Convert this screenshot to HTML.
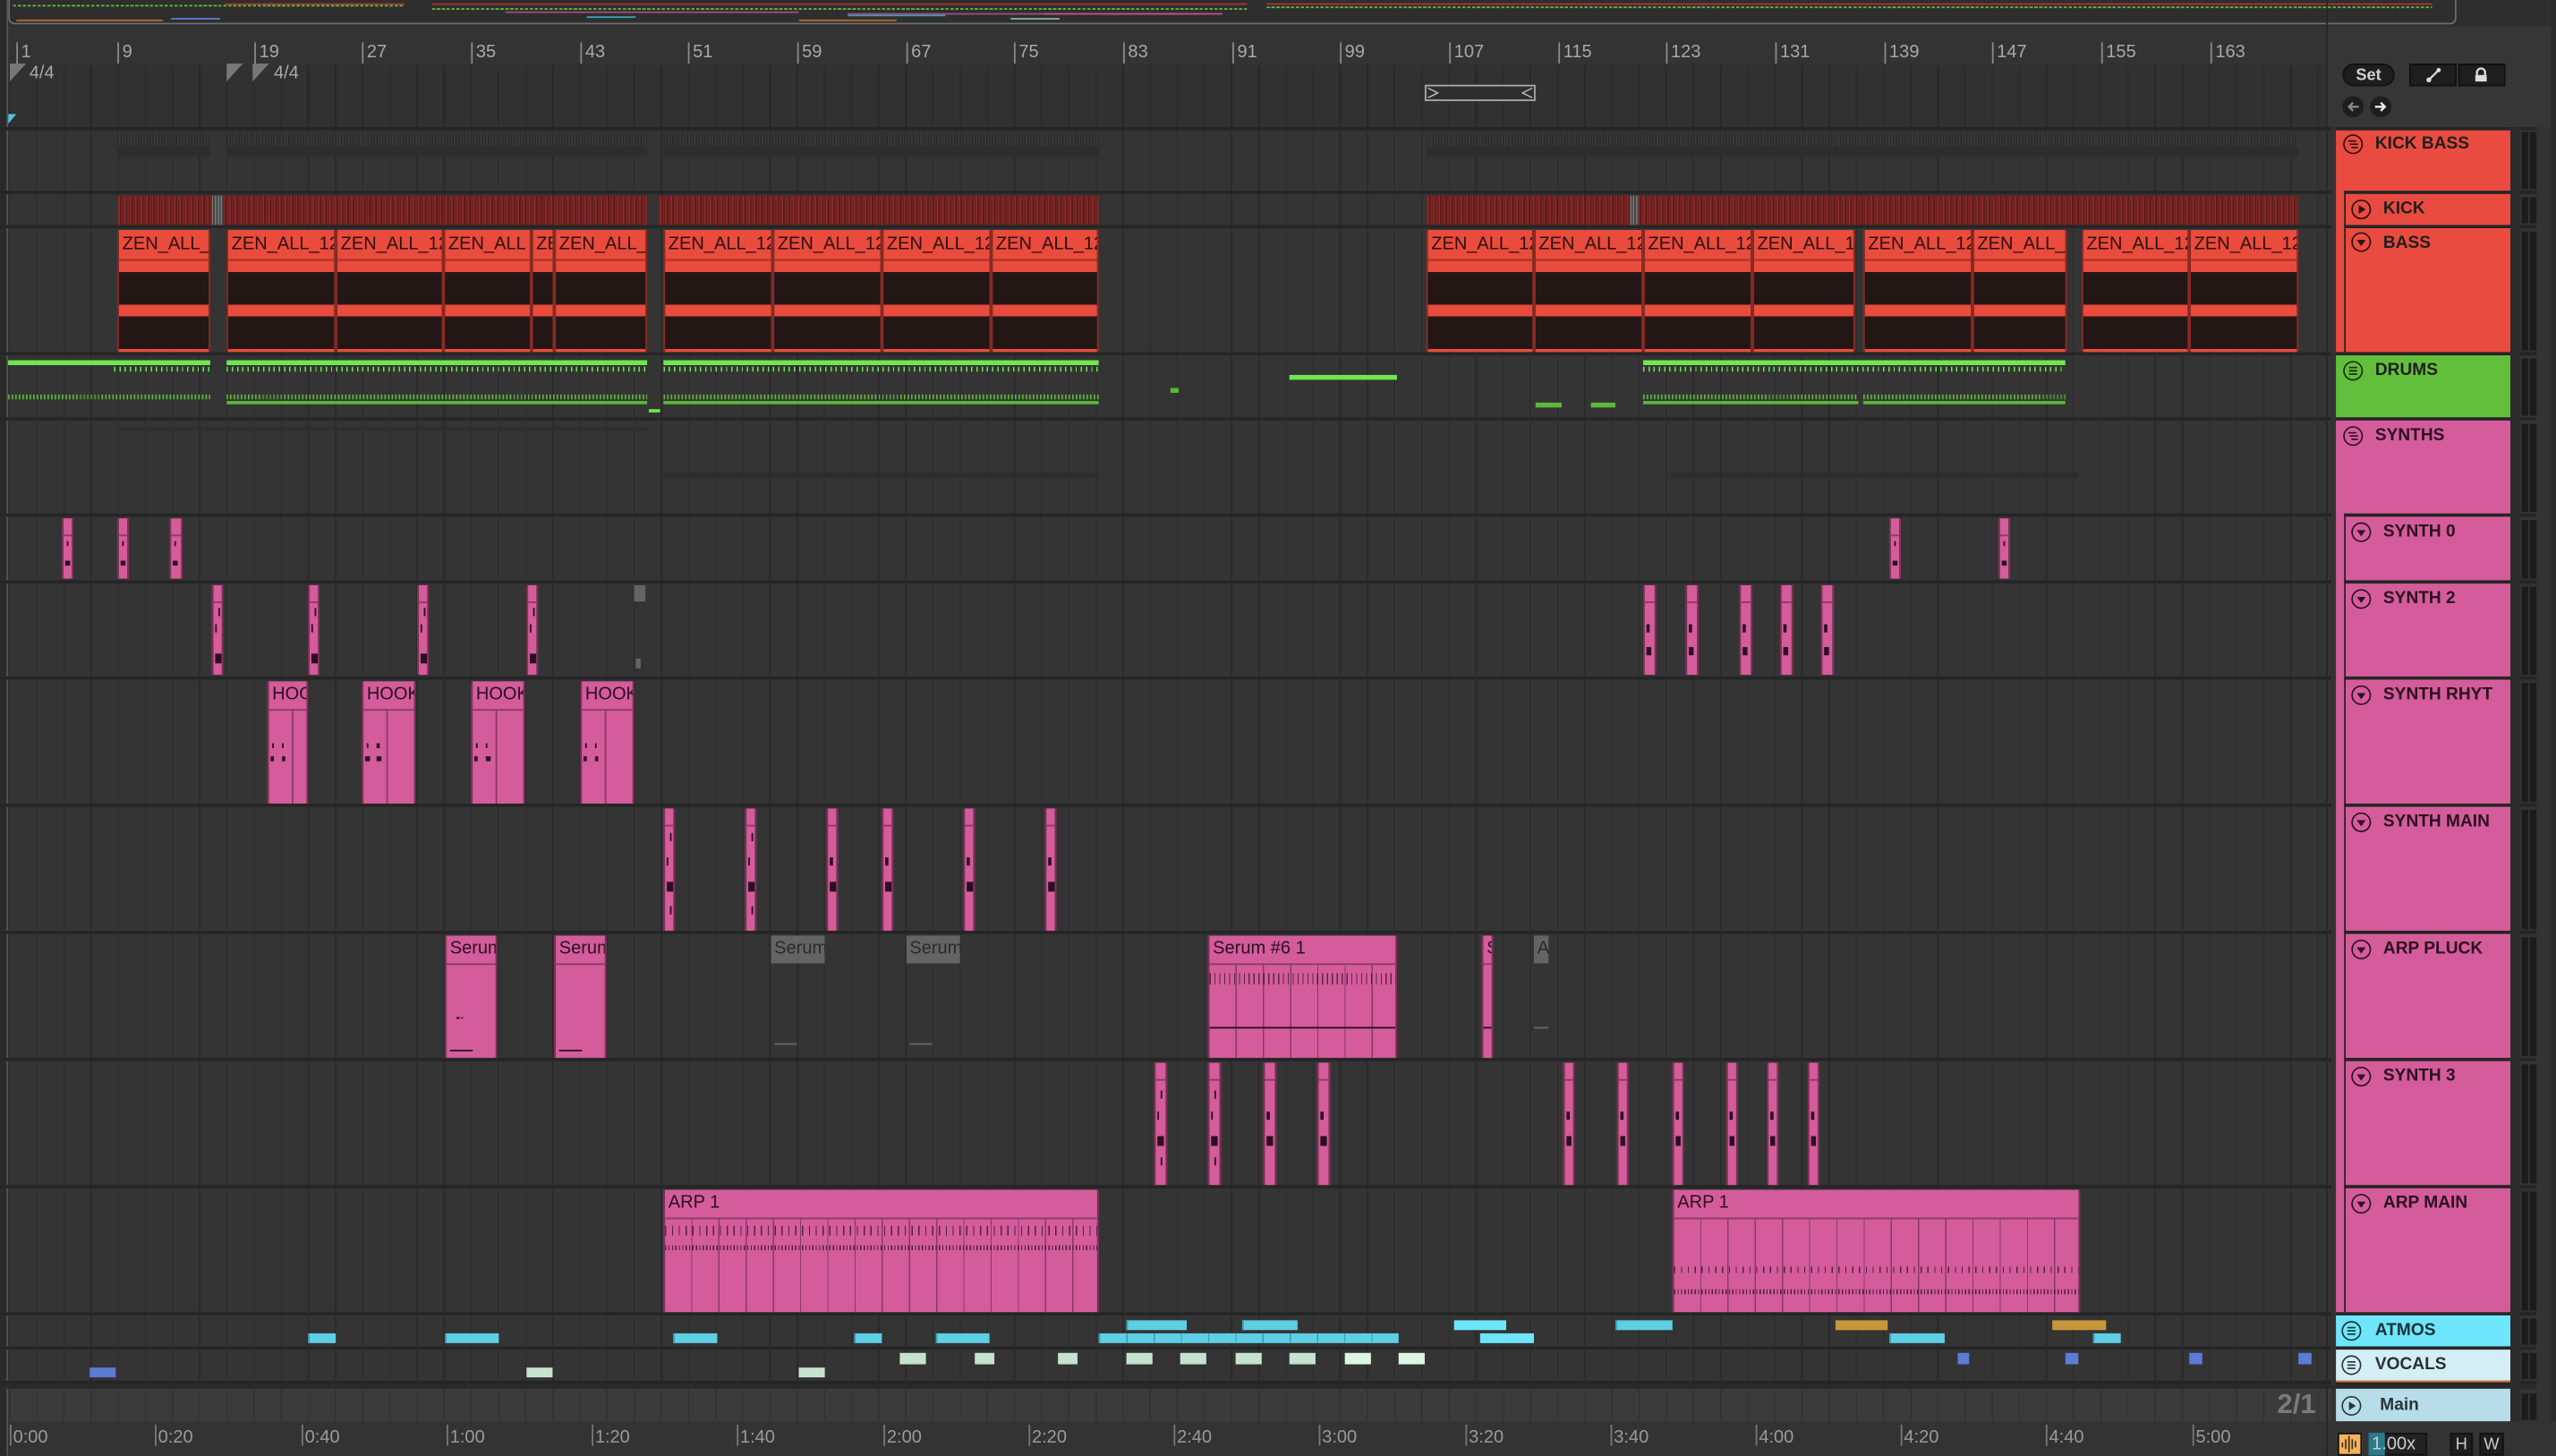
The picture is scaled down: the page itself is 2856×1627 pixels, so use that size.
<!DOCTYPE html>
<html><head><meta charset="utf-8">
<style>
html,body{margin:0;padding:0;background:#2f2f2f;overflow:hidden;}
#root{position:absolute;left:0;top:0;width:1568px;height:893px;transform:scale(1.82143);transform-origin:0 0;background:#333;font-family:"Liberation Sans",sans-serif;overflow:hidden;}
.a{position:absolute;box-sizing:border-box;}
.sep{position:absolute;left:0;width:1568px;height:2px;background:#252525;}
.grid{position:absolute;left:5px;width:1425px;background-color:#343434;background-image:repeating-linear-gradient(90deg,#292929 0 0.7px,transparent 0.7px 16.66px);background-position:0.6px 0;}
.rn{position:absolute;top:26px;font-size:11px;color:#a8a8a8;border-left:0.6px solid #888;padding-left:2px;height:13px;line-height:13px;}
.r{position:absolute;box-sizing:border-box;border-left:0.6px solid #8a2a22;border-right:0.6px solid #8a2a22;overflow:hidden;top:141px;height:75px;}
.r .h{height:18px;background:#e94b3c;color:#2a0f0f;font-size:11px;line-height:18px;padding-left:2px;white-space:nowrap;border-bottom:0.6px solid #9a2e26;}
.r .b{height:57px;background:linear-gradient(#e94b3c 0 7px,#231716 7px 27px,#e94b3c 27px 34px,#231716 34px 54px,#e94b3c 54px);}
.ks{position:absolute;top:120px;height:18px;background:repeating-linear-gradient(90deg,#6b2020 0 0.8px,#8c2b2a 0.8px 1.6px,#5a1c1c 1.6px 2.6px,#7a2424 2.6px 3.4px);}
.gs{position:absolute;top:81px;height:9px;background:repeating-linear-gradient(90deg,#2a2a2a 0 0.8px,#383838 0.8px 1.8px);}
.gb{position:absolute;top:90px;height:6px;background:#2d2d2d;}
.g{position:absolute;background:#6ee84e;}
.gd{position:absolute;background:repeating-linear-gradient(90deg,#6ee84e 0 0.8px,transparent 0.8px 3.2px);}
.gd2{position:absolute;background:repeating-linear-gradient(90deg,#5cb83a 0 0.8px,#3a5a30 0.8px 1.3px,transparent 1.3px 2.2px);}
.p{position:absolute;box-sizing:border-box;background:#d45c9b;border-left:0.7px solid #7d2f57;border-right:0.7px solid #7d2f57;overflow:hidden;}
.p .h{height:10px;border-bottom:0.8px solid #8a3a64;color:#2a0f1f;font-size:10px;line-height:11px;padding-left:2px;white-space:nowrap;}
.p .n{position:absolute;background:#2a0f1f;}
.gr{position:absolute;box-sizing:border-box;overflow:hidden;}
.gr .h{height:10px;background:#646464;color:#2a2a2a;font-size:10px;line-height:11px;padding-left:2px;white-space:nowrap;}
.ph{position:absolute;box-sizing:border-box;}
.lab{position:absolute;font-weight:bold;font-size:10.5px;color:#1f1f1f;white-space:nowrap;}
.ic{position:absolute;width:13px;height:13px;}
.m{position:absolute;left:1547px;width:3.5px;background:#1b1b1b;}
.m2{position:absolute;left:1552px;width:3.5px;background:#1b1b1b;}
.tl{position:absolute;top:874px;font-size:11px;color:#9a9a9a;border-left:0.6px solid #777;padding-left:1px;height:13px;line-height:16px;}
.cy{position:absolute;background:#5ecfe4;border-left:0.6px solid #3a9fb4;}
.cb{position:absolute;background:#6ee5fb;}
.vg{position:absolute;background:#c5e3cf;}
.vb{position:absolute;background:#5b7bd5;}
</style></head><body>
<div id="root">
<!-- overview strip -->
<div class="a" style="left:0;top:0;width:1568px;height:16px;background:#2e2e2e;"></div>
<div class="a" style="left:5px;top:0;width:1502px;height:15px;border:1.3px solid #6e6e6e;border-top:none;border-radius:0 0 4px 4px;"></div>
<div class="a" style="left:8px;top:3px;width:240px;height:1px;background:repeating-linear-gradient(90deg,#5cb83a 0 2px,transparent 2px 3px);"></div>
<div class="a" style="left:138px;top:2px;width:110px;height:1px;background:#a33;"></div>
<div class="a" style="left:265px;top:2px;width:500px;height:1px;background:#a33;"></div>
<div class="a" style="left:265px;top:5px;width:500px;height:1px;background:repeating-linear-gradient(90deg,#5cb83a 0 2px,transparent 2px 3px);"></div>
<div class="a" style="left:777px;top:2px;width:715px;height:1px;background:#a33;"></div>
<div class="a" style="left:777px;top:4px;width:715px;height:1px;background:repeating-linear-gradient(90deg,#5cb83a 0 2px,transparent 2px 3px);"></div>
<div class="a" style="left:10px;top:12px;width:90px;height:1px;background:#b86a2a;"></div>
<div class="a" style="left:105px;top:11px;width:30px;height:1px;background:#5b7bd5;"></div>
<div class="a" style="left:310px;top:7px;width:180px;height:1px;background:#a04a80;"></div>
<div class="a" style="left:360px;top:10px;width:30px;height:1px;background:#3a9fb4;"></div>
<div class="a" style="left:520px;top:9px;width:60px;height:1px;background:#3a9fb4;"></div>
<div class="a" style="left:520px;top:8px;width:220px;height:1px;background:#a04a80;"></div>
<div class="a" style="left:620px;top:11px;width:30px;height:1px;background:#8aa;"></div>
<div class="a" style="left:640px;top:8px;width:110px;height:1px;background:#c0508a;"></div>
<div class="a" style="left:490px;top:12px;width:60px;height:1px;background:#b86a2a;"></div>
<div class="a" style="left:0;top:0;width:5px;height:893px;background:#2a2a2a;"></div>
<div class="a" style="left:4px;top:0;width:1px;height:893px;background:#555;"></div>

<!-- ruler -->
<div class="a" style="left:5px;top:16px;width:1425px;height:24px;background:#333;"></div>
<div class="rn" style="left:10px">1</div>
<div class="rn" style="left:72px">9</div>
<div class="rn" style="left:156px">19</div>
<div class="rn" style="left:222px">27</div>
<div class="rn" style="left:289px">35</div>
<div class="rn" style="left:356px">43</div>
<div class="rn" style="left:422px">51</div>
<div class="rn" style="left:489px">59</div>
<div class="rn" style="left:556px">67</div>
<div class="rn" style="left:622px">75</div>
<div class="rn" style="left:689px">83</div>
<div class="rn" style="left:756px">91</div>
<div class="rn" style="left:822px">99</div>
<div class="rn" style="left:889px">107</div>
<div class="rn" style="left:956px">115</div>
<div class="rn" style="left:1022px">123</div>
<div class="rn" style="left:1089px">131</div>
<div class="rn" style="left:1156px">139</div>
<div class="rn" style="left:1222px">147</div>
<div class="rn" style="left:1289px">155</div>
<div class="rn" style="left:1356px">163</div>

<!-- grid area -->
<div class="grid" style="top:40px;height:810px;"></div>
<div class="a" style="left:5px;top:40px;width:1425px;height:38px;background:rgba(0,0,0,0.05);"></div>
<!-- time signature markers -->
<svg class="a" style="left:5px;top:39px" width="12" height="12"><path d="M1 0 L11 0 L1 11 Z" fill="#777"/></svg>
<div class="a" style="left:18px;top:39px;font-size:11px;color:#aaa;">4/4</div>
<svg class="a" style="left:138px;top:39px" width="12" height="12"><path d="M1 0 L11 0 L1 11 Z" fill="#777"/></svg>
<svg class="a" style="left:154px;top:39px" width="12" height="12"><path d="M1 0 L11 0 L1 11 Z" fill="#777"/></svg>
<div class="a" style="left:168px;top:39px;font-size:11px;color:#aaa;">4/4</div>
<svg class="a" style="left:5px;top:70px" width="6" height="6"><path d="M0 0 L5 0 L0 6 Z" fill="#4ec3e0"/></svg>
<!-- loop brace -->
<div class="a" style="left:874px;top:52px;width:68px;height:10px;border:0.8px solid #aaa;background:#2e2e2e;"></div>
<svg class="a" style="left:874px;top:52px" width="68" height="10"><path d="M2 2 L8 5 L2 8" stroke="#bbb" fill="none" stroke-width="0.8"/><path d="M66 2 L60 5 L66 8" stroke="#bbb" fill="none" stroke-width="0.8"/></svg>

<!-- separators -->
<div class="sep" style="top:78px"></div>
<div class="sep" style="top:117px"></div>
<div class="sep" style="top:138px"></div>
<div class="sep" style="top:216px"></div>
<div class="sep" style="top:256px"></div>
<div class="sep" style="top:315px"></div>
<div class="sep" style="top:356px"></div>
<div class="sep" style="top:415px"></div>
<div class="sep" style="top:493px"></div>
<div class="sep" style="top:571px"></div>
<div class="sep" style="top:649px"></div>
<div class="sep" style="top:727px"></div>
<div class="sep" style="top:805px"></div>
<div class="sep" style="top:826px"></div>
<div class="sep" style="top:847px"></div>
<div class="sep" style="top:849px;height:3px;background:#2a2a2a"></div>

<!-- KICK BASS group faint -->
<div class="gs" style="left:72px;width:57px"></div><div class="gs" style="left:139px;width:258px"></div><div class="gs" style="left:407px;width:267px"></div><div class="gs" style="left:875px;width:535px"></div>
<div class="gb" style="left:72px;width:57px"></div><div class="gb" style="left:139px;width:258px"></div><div class="gb" style="left:407px;width:267px"></div><div class="gb" style="left:875px;width:535px"></div>

<!-- KICK -->
<div class="ks" style="left:72px;width:325px"></div>
<div class="a" style="left:130px;top:120px;width:7px;height:18px;background:repeating-linear-gradient(90deg,#777 0 0.8px,#444 0.8px 1.8px);"></div>
<div class="ks" style="left:404px;width:270px"></div>
<div class="ks" style="left:875px;width:535px"></div>
<div class="a" style="left:1000px;top:120px;width:5px;height:18px;background:repeating-linear-gradient(90deg,#777 0 0.8px,#444 0.8px 1.8px);"></div>

<!-- BASS clips -->
<div class="r" style="left:72px;width:57px"><div class="h">ZEN_ALL_</div><div class="b"></div></div>
<div class="r" style="left:139px;width:67px"><div class="h">ZEN_ALL_12</div><div class="b"></div></div>
<div class="r" style="left:206px;width:66px"><div class="h">ZEN_ALL_12</div><div class="b"></div></div>
<div class="r" style="left:272px;width:54px"><div class="h">ZEN_ALL</div><div class="b"></div></div>
<div class="r" style="left:326px;width:14px"><div class="h">ZE</div><div class="b"></div></div>
<div class="r" style="left:340px;width:57px"><div class="h">ZEN_ALL_</div><div class="b"></div></div>
<div class="r" style="left:407px;width:67px"><div class="h">ZEN_ALL_12</div><div class="b"></div></div>
<div class="r" style="left:474px;width:67px"><div class="h">ZEN_ALL_12</div><div class="b"></div></div>
<div class="r" style="left:541px;width:67px"><div class="h">ZEN_ALL_12</div><div class="b"></div></div>
<div class="r" style="left:608px;width:66px"><div class="h">ZEN_ALL_12</div><div class="b"></div></div>
<div class="r" style="left:875px;width:66px"><div class="h">ZEN_ALL_12</div><div class="b"></div></div>
<div class="r" style="left:941px;width:67px"><div class="h">ZEN_ALL_12</div><div class="b"></div></div>
<div class="r" style="left:1008px;width:67px"><div class="h">ZEN_ALL_12</div><div class="b"></div></div>
<div class="r" style="left:1075px;width:63px"><div class="h">ZEN_ALL_1</div><div class="b"></div></div>
<div class="r" style="left:1143px;width:67px"><div class="h">ZEN_ALL_12</div><div class="b"></div></div>
<div class="r" style="left:1210px;width:58px"><div class="h">ZEN_ALL_</div><div class="b"></div></div>
<div class="r" style="left:1277px;width:66px"><div class="h">ZEN_ALL_12</div><div class="b"></div></div>
<div class="r" style="left:1343px;width:67px"><div class="h">ZEN_ALL_12</div><div class="b"></div></div>

<!-- DRUMS -->
<div class="g" style="left:5px;top:221px;width:124px;height:3px"></div>
<div class="g" style="left:139px;top:221px;width:258px;height:3px"></div>
<div class="g" style="left:407px;top:221px;width:267px;height:3px"></div>
<div class="g" style="left:1008px;top:221px;width:259px;height:3px"></div>
<div class="gd" style="left:70px;top:225px;width:59px;height:3px"></div>
<div class="gd" style="left:139px;top:225px;width:258px;height:3px"></div>
<div class="gd" style="left:407px;top:225px;width:267px;height:3px"></div>
<div class="gd" style="left:1008px;top:225px;width:259px;height:3px"></div>
<div class="gd2" style="left:5px;top:242px;width:124px;height:3px"></div>
<div class="gd2" style="left:139px;top:242px;width:258px;height:3px"></div>
<div class="g" style="left:139px;top:246px;width:258px;height:2px;background:#5cb83a"></div>
<div class="gd2" style="left:407px;top:242px;width:267px;height:3px"></div>
<div class="g" style="left:407px;top:246px;width:267px;height:2px;background:#5cb83a"></div>
<div class="gd2" style="left:1008px;top:242px;width:132px;height:3px"></div>
<div class="gd2" style="left:1143px;top:242px;width:124px;height:3px"></div>
<div class="g" style="left:1008px;top:246px;width:132px;height:2px;background:#5cb83a"></div>
<div class="g" style="left:1143px;top:246px;width:124px;height:2px;background:#5cb83a"></div>
<div class="g" style="left:398px;top:251px;width:7px;height:2px"></div>
<div class="g" style="left:718px;top:238px;width:5px;height:3px;background:#5cb83a"></div>
<div class="g" style="left:791px;top:230px;width:66px;height:3px"></div>
<div class="g" style="left:942px;top:247px;width:16px;height:3px;background:#5cb83a"></div>
<div class="g" style="left:976px;top:247px;width:15px;height:3px;background:#5cb83a"></div>

<!-- SYNTHS faint -->
<div class="a" style="left:407px;top:290px;width:267px;height:3px;background:#2c2c2c"></div>
<div class="a" style="left:1025px;top:290px;width:250px;height:3px;background:#2c2c2c"></div>
<div class="a" style="left:72px;top:262px;width:325px;height:2px;background:#2e2e2e"></div>

<!-- SYNTH 0 -->
<div class="p" style="left:38px;top:318px;width:7px;height:37px"><div class="h"></div><div class="n" style="left:2px;top:14px;width:1px;height:3px"></div><div class="n" style="left:1px;top:26px;width:3px;height:3px"></div></div>
<div class="p" style="left:72px;top:318px;width:7px;height:37px"><div class="h"></div><div class="n" style="left:2px;top:14px;width:1px;height:3px"></div><div class="n" style="left:1px;top:26px;width:3px;height:3px"></div></div>
<div class="p" style="left:104px;top:318px;width:8px;height:37px"><div class="h"></div><div class="n" style="left:2px;top:14px;width:1px;height:3px"></div><div class="n" style="left:1px;top:26px;width:3px;height:3px"></div></div>
<div class="p" style="left:1159px;top:318px;width:7px;height:37px"><div class="h"></div><div class="n" style="left:2px;top:14px;width:1px;height:3px"></div><div class="n" style="left:1px;top:26px;width:3px;height:3px"></div></div>
<div class="p" style="left:1226px;top:318px;width:7px;height:37px"><div class="h"></div><div class="n" style="left:2px;top:14px;width:1px;height:3px"></div><div class="n" style="left:1px;top:26px;width:3px;height:3px"></div></div>

<!-- SYNTH 2 -->
<div class="p" style="left:130px;top:359px;width:7px;height:55px"><div class="h"></div><div class="n" style="left:3px;top:14px;width:1px;height:5px"></div><div class="n" style="left:1px;top:24px;width:1px;height:5px"></div><div class="n" style="left:1px;top:42px;width:4px;height:6px"></div></div>
<div class="p" style="left:189px;top:359px;width:7px;height:55px"><div class="h"></div><div class="n" style="left:3px;top:14px;width:1px;height:5px"></div><div class="n" style="left:1px;top:24px;width:1px;height:5px"></div><div class="n" style="left:1px;top:42px;width:4px;height:6px"></div></div>
<div class="p" style="left:256px;top:359px;width:7px;height:55px"><div class="h"></div><div class="n" style="left:3px;top:14px;width:1px;height:5px"></div><div class="n" style="left:1px;top:24px;width:1px;height:5px"></div><div class="n" style="left:1px;top:42px;width:4px;height:6px"></div></div>
<div class="p" style="left:323px;top:359px;width:7px;height:55px"><div class="h"></div><div class="n" style="left:3px;top:14px;width:1px;height:5px"></div><div class="n" style="left:1px;top:24px;width:1px;height:5px"></div><div class="n" style="left:1px;top:42px;width:4px;height:6px"></div></div>
<div class="gr" style="left:389px;top:359px;width:7px;height:55px"><div class="h"></div><div class="a" style="left:1px;top:45px;width:3px;height:6px;background:#666"></div></div>
<div class="p" style="left:1008px;top:359px;width:8px;height:55px"><div class="h"></div><div class="n" style="left:1px;top:24px;width:2px;height:5px"></div><div class="n" style="left:1px;top:38px;width:3px;height:5px"></div></div>
<div class="p" style="left:1034px;top:359px;width:8px;height:55px"><div class="h"></div><div class="n" style="left:1px;top:24px;width:2px;height:5px"></div><div class="n" style="left:1px;top:38px;width:3px;height:5px"></div></div>
<div class="p" style="left:1067px;top:359px;width:8px;height:55px"><div class="h"></div><div class="n" style="left:1px;top:24px;width:2px;height:5px"></div><div class="n" style="left:1px;top:38px;width:3px;height:5px"></div></div>
<div class="p" style="left:1092px;top:359px;width:8px;height:55px"><div class="h"></div><div class="n" style="left:1px;top:24px;width:2px;height:5px"></div><div class="n" style="left:1px;top:38px;width:3px;height:5px"></div></div>
<div class="p" style="left:1117px;top:359px;width:8px;height:55px"><div class="h"></div><div class="n" style="left:1px;top:24px;width:2px;height:5px"></div><div class="n" style="left:1px;top:38px;width:3px;height:5px"></div></div>

<!-- SYNTH RHYT -->
<div class="p" style="left:164px;top:418px;width:25px;height:75px"><div class="h" style="height:17px;line-height:17px;font-size:11px">HOO</div><div class="a" style="left:14px;top:17px;width:0.6px;height:58px;background:#8a3a64"></div><div class="n" style="left:2px;top:38px;width:1px;height:3px"></div><div class="n" style="left:8px;top:38px;width:1px;height:3px"></div><div class="n" style="left:1px;top:46px;width:2px;height:3px"></div><div class="n" style="left:8px;top:46px;width:2px;height:3px"></div></div>
<div class="p" style="left:222px;top:418px;width:33px;height:75px"><div class="h" style="height:17px;line-height:17px;font-size:11px">HOOK</div><div class="a" style="left:14px;top:17px;width:0.6px;height:58px;background:#8a3a64"></div><div class="n" style="left:2px;top:38px;width:1px;height:3px"></div><div class="n" style="left:8px;top:38px;width:2px;height:3px"></div><div class="n" style="left:1px;top:46px;width:3px;height:3px"></div><div class="n" style="left:8px;top:46px;width:3px;height:3px"></div></div>
<div class="p" style="left:289px;top:418px;width:33px;height:75px"><div class="h" style="height:17px;line-height:17px;font-size:11px">HOOK</div><div class="a" style="left:14px;top:17px;width:0.6px;height:58px;background:#8a3a64"></div><div class="n" style="left:2px;top:38px;width:1px;height:3px"></div><div class="n" style="left:8px;top:38px;width:1px;height:3px"></div><div class="n" style="left:1px;top:46px;width:2px;height:3px"></div><div class="n" style="left:8px;top:46px;width:3px;height:3px"></div></div>
<div class="p" style="left:356px;top:418px;width:33px;height:75px"><div class="h" style="height:17px;line-height:17px;font-size:11px">HOOK</div><div class="a" style="left:14px;top:17px;width:0.6px;height:58px;background:#8a3a64"></div><div class="n" style="left:2px;top:38px;width:1px;height:3px"></div><div class="n" style="left:8px;top:38px;width:1px;height:3px"></div><div class="n" style="left:1px;top:46px;width:2px;height:3px"></div><div class="n" style="left:8px;top:46px;width:2px;height:3px"></div></div>

<!-- SYNTH MAIN -->
<div class="p" style="left:407px;top:496px;width:7px;height:75px"><div class="h"></div><div class="n" style="left:3px;top:15px;width:1px;height:5px"></div><div class="n" style="left:1px;top:30px;width:1px;height:5px"></div><div class="n" style="left:1px;top:45px;width:4px;height:6px"></div><div class="n" style="left:3px;top:60px;width:1px;height:5px"></div></div>
<div class="p" style="left:457px;top:496px;width:7px;height:75px"><div class="h"></div><div class="n" style="left:3px;top:15px;width:1px;height:5px"></div><div class="n" style="left:1px;top:30px;width:1px;height:5px"></div><div class="n" style="left:1px;top:45px;width:4px;height:6px"></div><div class="n" style="left:3px;top:60px;width:1px;height:5px"></div></div>
<div class="p" style="left:507px;top:496px;width:7px;height:75px"><div class="h"></div><div class="n" style="left:1px;top:30px;width:2px;height:5px"></div><div class="n" style="left:1px;top:45px;width:4px;height:6px"></div></div>
<div class="p" style="left:541px;top:496px;width:7px;height:75px"><div class="h"></div><div class="n" style="left:1px;top:30px;width:2px;height:5px"></div><div class="n" style="left:1px;top:45px;width:4px;height:6px"></div></div>
<div class="p" style="left:591px;top:496px;width:7px;height:75px"><div class="h"></div><div class="n" style="left:1px;top:30px;width:2px;height:5px"></div><div class="n" style="left:1px;top:45px;width:4px;height:6px"></div></div>
<div class="p" style="left:641px;top:496px;width:7px;height:75px"><div class="h"></div><div class="n" style="left:1px;top:30px;width:2px;height:5px"></div><div class="n" style="left:1px;top:45px;width:4px;height:6px"></div></div>

<!-- ARP PLUCK -->
<div class="p" style="left:273px;top:574px;width:32px;height:75px"><div class="h" style="height:17px;line-height:17px;font-size:11px">Serum</div><div class="a" style="left:2px;top:70px;width:14px;height:0.8px;background:#2a0f1f"></div><div class="n" style="left:6px;top:50px;width:4px;height:4px;background:none;border-top:1px dotted #2a0f1f"></div></div>
<div class="p" style="left:340px;top:574px;width:32px;height:75px"><div class="h" style="height:17px;line-height:17px;font-size:11px">Serum</div><div class="a" style="left:2px;top:70px;width:14px;height:0.8px;background:#2a0f1f"></div></div>
<div class="gr" style="left:473px;top:574px;width:33px;height:75px"><div class="h" style="height:17px;line-height:17px;font-size:11px">Serum</div><div class="a" style="left:2px;top:66px;width:14px;height:0.8px;background:#666"></div></div>
<div class="gr" style="left:556px;top:574px;width:33px;height:75px"><div class="h" style="height:17px;line-height:17px;font-size:11px">Serum</div><div class="a" style="left:2px;top:66px;width:14px;height:0.8px;background:#666"></div></div>
<div class="p" style="left:741px;top:574px;width:116px;height:75px;background-image:repeating-linear-gradient(90deg,transparent 0 16px,#8a3a64 16px 16.7px);"><div class="h" style="height:17px;line-height:17px;font-size:11px;background:#d45c9b">Serum #6 1</div><div class="a" style="left:0;top:23px;width:116px;height:7px;background:repeating-linear-gradient(90deg,#2a0f1f 0 0.7px,transparent 0.7px 3px);opacity:0.7"></div><div class="a" style="left:0;top:56px;width:116px;height:0.9px;background:#2a0f1f"></div></div>
<div class="p" style="left:909px;top:574px;width:7px;height:75px"><div class="h" style="height:17px;line-height:17px;font-size:11px">S</div><div class="a" style="left:0;top:56px;width:7px;height:0.9px;background:#2a0f1f"></div></div>
<div class="gr" style="left:941px;top:574px;width:9px;height:75px"><div class="h" style="height:17px;line-height:17px;font-size:11px">A</div><div class="a" style="left:0;top:56px;width:9px;height:0.9px;background:#666"></div></div>

<!-- SYNTH 3 -->
<div class="p" style="left:708px;top:652px;width:8px;height:75px"><div class="h"></div><div class="n" style="left:3px;top:17px;width:1px;height:5px"></div><div class="n" style="left:1px;top:30px;width:1px;height:5px"></div><div class="n" style="left:1px;top:45px;width:4px;height:6px"></div><div class="n" style="left:3px;top:58px;width:1px;height:5px"></div></div>
<div class="p" style="left:741px;top:652px;width:8px;height:75px"><div class="h"></div><div class="n" style="left:3px;top:17px;width:1px;height:5px"></div><div class="n" style="left:1px;top:30px;width:1px;height:5px"></div><div class="n" style="left:1px;top:45px;width:4px;height:6px"></div><div class="n" style="left:3px;top:58px;width:1px;height:5px"></div></div>
<div class="p" style="left:775px;top:652px;width:8px;height:75px"><div class="h"></div><div class="n" style="left:1px;top:30px;width:2px;height:5px"></div><div class="n" style="left:1px;top:45px;width:4px;height:6px"></div></div>
<div class="p" style="left:808px;top:652px;width:8px;height:75px"><div class="h"></div><div class="n" style="left:1px;top:30px;width:2px;height:5px"></div><div class="n" style="left:1px;top:45px;width:4px;height:6px"></div></div>
<div class="p" style="left:959px;top:652px;width:7px;height:75px"><div class="h"></div><div class="n" style="left:1px;top:30px;width:2px;height:5px"></div><div class="n" style="left:1px;top:45px;width:3px;height:6px"></div></div>
<div class="p" style="left:992px;top:652px;width:7px;height:75px"><div class="h"></div><div class="n" style="left:1px;top:30px;width:2px;height:5px"></div><div class="n" style="left:1px;top:45px;width:3px;height:6px"></div></div>
<div class="p" style="left:1026px;top:652px;width:7px;height:75px"><div class="h"></div><div class="n" style="left:1px;top:30px;width:2px;height:5px"></div><div class="n" style="left:1px;top:45px;width:3px;height:6px"></div></div>
<div class="p" style="left:1059px;top:652px;width:7px;height:75px"><div class="h"></div><div class="n" style="left:1px;top:30px;width:2px;height:5px"></div><div class="n" style="left:1px;top:45px;width:3px;height:6px"></div></div>
<div class="p" style="left:1084px;top:652px;width:7px;height:75px"><div class="h"></div><div class="n" style="left:1px;top:30px;width:2px;height:5px"></div><div class="n" style="left:1px;top:45px;width:3px;height:6px"></div></div>
<div class="p" style="left:1109px;top:652px;width:7px;height:75px"><div class="h"></div><div class="n" style="left:1px;top:30px;width:2px;height:5px"></div><div class="n" style="left:1px;top:45px;width:3px;height:6px"></div></div>

<!-- ARP MAIN -->
<div class="p" style="left:407px;top:730px;width:267px;height:75px;background-image:repeating-linear-gradient(90deg,transparent 0 16px,#8a3a64 16px 16.7px);"><div class="h" style="height:17px;line-height:17px;font-size:11px;background:#d45c9b">ARP 1</div><div class="a" style="left:0;top:22px;width:267px;height:6px;background:repeating-linear-gradient(90deg,#2a0f1f 0 0.7px,transparent 0.7px 4.2px);opacity:0.75"></div><div class="a" style="left:0;top:34px;width:267px;height:3px;background:repeating-linear-gradient(90deg,#2a0f1f 0 0.7px,transparent 0.7px 2.1px);opacity:0.8"></div></div>
<div class="p" style="left:1026px;top:730px;width:250px;height:75px;background-image:repeating-linear-gradient(90deg,transparent 0 16px,#8a3a64 16px 16.7px);"><div class="h" style="height:17px;line-height:17px;font-size:11px;background:#d45c9b">ARP 1</div><div class="a" style="left:0;top:47px;width:250px;height:4px;background:repeating-linear-gradient(90deg,#2a0f1f 0 0.7px,transparent 0.7px 4.2px);opacity:0.75"></div><div class="a" style="left:0;top:61px;width:250px;height:3px;background:repeating-linear-gradient(90deg,#2a0f1f 0 0.7px,transparent 0.7px 2.1px);opacity:0.8"></div></div>

<!-- ATMOS -->
<div class="cy" style="left:691px;top:810px;width:36px;height:6px"></div>
<div class="cy" style="left:762px;top:810px;width:33px;height:6px"></div>
<div class="cb" style="left:892px;top:810px;width:32px;height:6px"></div>
<div class="cy" style="left:991px;top:810px;width:34px;height:6px"></div>
<div class="a" style="left:1126px;top:810px;width:32px;height:6px;background:#c8973a"></div>
<div class="a" style="left:1259px;top:810px;width:33px;height:6px;background:#c8973a"></div>
<div class="cy" style="left:189px;top:818px;width:16px;height:6px"></div>
<div class="cy" style="left:273px;top:818px;width:32px;height:6px"></div>
<div class="cy" style="left:413px;top:818px;width:26px;height:6px"></div>
<div class="cy" style="left:524px;top:818px;width:16px;height:6px"></div>
<div class="cy" style="left:574px;top:818px;width:32px;height:6px"></div>
<div class="cy" style="left:674px;top:818px;width:183px;height:6px;background-image:repeating-linear-gradient(90deg,transparent 0 16px,#3a9fb4 16px 16.7px)"></div>
<div class="cb" style="left:908px;top:818px;width:33px;height:6px"></div>
<div class="cy" style="left:1159px;top:818px;width:33px;height:6px"></div>
<div class="cy" style="left:1284px;top:818px;width:16px;height:6px"></div>

<!-- VOCALS -->
<div class="vb" style="left:55px;top:839px;width:16px;height:6px"></div>
<div class="vg" style="left:323px;top:839px;width:16px;height:6px"></div>
<div class="vg" style="left:490px;top:839px;width:16px;height:6px"></div>
<div class="vg" style="left:552px;top:830px;width:16px;height:7px"></div>
<div class="vg" style="left:598px;top:830px;width:12px;height:7px"></div>
<div class="vg" style="left:649px;top:830px;width:12px;height:7px"></div>
<div class="vg" style="left:691px;top:830px;width:16px;height:7px"></div>
<div class="vg" style="left:724px;top:830px;width:16px;height:7px"></div>
<div class="vg" style="left:758px;top:830px;width:16px;height:7px"></div>
<div class="vg" style="left:791px;top:830px;width:16px;height:7px"></div>
<div class="vg" style="left:825px;top:830px;width:16px;height:7px;background:#ddf7e4"></div>
<div class="vg" style="left:858px;top:830px;width:16px;height:7px;background:#ddf7e4"></div>
<div class="vb" style="left:1201px;top:830px;width:7px;height:7px"></div>
<div class="vb" style="left:1267px;top:830px;width:8px;height:7px"></div>
<div class="vb" style="left:1343px;top:830px;width:8px;height:7px"></div>
<div class="vb" style="left:1410px;top:830px;width:8px;height:7px"></div>

<!-- Main row -->
<div class="a" style="left:5px;top:852px;width:1425px;height:20px;background-color:#3b3b3b;background-image:repeating-linear-gradient(90deg,#303030 0 0.7px,transparent 0.7px 16.66px);background-position:0.6px 0;"></div>
<div class="a" style="left:1397px;top:852px;font-size:17px;font-weight:bold;color:#7a7a7a;line-height:20px;">2/1</div>

<!-- time ruler -->
<div class="a" style="left:5px;top:872px;width:1425px;height:21px;background:#333;"></div>
<div class="tl" style="left:6px">0:00</div>
<div class="tl" style="left:95px">0:20</div>
<div class="tl" style="left:185px">0:40</div>
<div class="tl" style="left:274px">1:00</div>
<div class="tl" style="left:363px">1:20</div>
<div class="tl" style="left:452px">1:40</div>
<div class="tl" style="left:542px">2:00</div>
<div class="tl" style="left:631px">2:20</div>
<div class="tl" style="left:720px">2:40</div>
<div class="tl" style="left:809px">3:00</div>
<div class="tl" style="left:899px">3:20</div>
<div class="tl" style="left:988px">3:40</div>
<div class="tl" style="left:1077px">4:00</div>
<div class="tl" style="left:1166px">4:20</div>
<div class="tl" style="left:1255px">4:40</div>
<div class="tl" style="left:1345px">5:00</div>

<!-- right panel -->
<div class="a" style="left:1427px;top:16px;width:141px;height:62px;background:#363636;"></div>
<div class="a" style="left:1427px;top:0;width:1px;height:893px;background:#262626;"></div>
<div class="a" style="left:1430px;top:78px;width:3px;height:772px;background:#333;"></div>
<div class="a" style="left:1540px;top:78px;width:6px;height:795px;background:#2b2b2b;"></div>
<div class="a" style="left:1556px;top:78px;width:12px;height:795px;background:#333;"></div>
<div class="a" style="left:1565px;top:0;width:3px;height:893px;background:#2a2a2a;"></div>
<div class="a" style="left:1437px;top:39px;width:32px;height:14px;border-radius:7px;background:#1e1e1e;border:0.6px solid #111;color:#d0d0d0;font-size:10px;font-weight:bold;text-align:center;line-height:13px;">Set</div>
<div class="a" style="left:1478px;top:39px;width:29px;height:14px;background:#1e1e1e;border:0.6px solid #111;"></div>
<svg class="a" style="left:1487px;top:40px" width="12" height="12"><line x1="3" y1="9" x2="9" y2="3" stroke="#ddd" stroke-width="1.2"/><circle cx="3" cy="9" r="1.5" fill="#ddd"/><circle cx="9" cy="3" r="1.3" fill="#ddd"/></svg>
<div class="a" style="left:1508px;top:39px;width:29px;height:14px;background:#1e1e1e;border:0.6px solid #111;"></div>
<svg class="a" style="left:1516px;top:40px" width="12" height="12"><path d="M3.5 6 V4.5 a2.5 2.5 0 0 1 5 0 V6" stroke="#ddd" stroke-width="1.3" fill="none"/><rect x="2.5" y="6" width="7" height="4" fill="#ddd"/></svg>
<div class="a" style="left:1437px;top:59px;width:13px;height:13px;border-radius:50%;background:#1e1e1e;"></div>
<svg class="a" style="left:1437px;top:59px" width="13" height="13"><path d="M10 6.5 H4 M6.5 4 L4 6.5 L6.5 9" stroke="#888" stroke-width="1.3" fill="none"/></svg>
<div class="a" style="left:1454px;top:59px;width:13px;height:13px;border-radius:50%;background:#1e1e1e;"></div>
<svg class="a" style="left:1454px;top:59px" width="13" height="13"><path d="M3 6.5 H9 M6.5 4 L9 6.5 L6.5 9" stroke="#eee" stroke-width="1.3" fill="none"/></svg>

<!-- headers -->
<div class="ph" style="left:1433px;top:80px;width:107px;height:136px;background:#ea4b40;"></div>
<div class="ph" style="left:1438px;top:117px;width:102px;height:2px;background:#252525;"></div>
<div class="ph" style="left:1438px;top:117px;width:1.2px;height:99px;background:#252525;"></div>
<div class="ph" style="left:1438px;top:138px;width:102px;height:2px;background:#252525;"></div>
<div class="ph" style="left:1433px;top:218px;width:107px;height:38px;background:#62bf3b;"></div>
<div class="ph" style="left:1433px;top:258px;width:107px;height:547px;background:#d45c9b;"></div>
<div class="ph" style="left:1438px;top:315px;width:1.2px;height:490px;background:#252525;"></div>
<div class="ph" style="left:1438px;top:315px;width:102px;height:2px;background:#252525;"></div>
<div class="ph" style="left:1438px;top:356px;width:102px;height:2px;background:#252525;"></div>
<div class="ph" style="left:1438px;top:415px;width:102px;height:2px;background:#252525;"></div>
<div class="ph" style="left:1438px;top:493px;width:102px;height:2px;background:#252525;"></div>
<div class="ph" style="left:1438px;top:571px;width:102px;height:2px;background:#252525;"></div>
<div class="ph" style="left:1438px;top:649px;width:102px;height:2px;background:#252525;"></div>
<div class="ph" style="left:1438px;top:727px;width:102px;height:2px;background:#252525;"></div>
<div class="ph" style="left:1433px;top:807px;width:107px;height:19px;background:#6ee5fb;"></div>
<div class="ph" style="left:1433px;top:828px;width:107px;height:19px;background:#d3eff5;"></div>
<div class="ph" style="left:1433px;top:847px;width:107px;height:1.2px;background:#e8702a;"></div>
<div class="ph" style="left:1433px;top:852px;width:107px;height:20px;background:#b7dde8;"></div>

<!-- icons: group -->
<svg class="ic" style="left:1437px;top:82px" viewBox="0 0 13 13"><circle cx="6.5" cy="6.5" r="5.6" fill="none" stroke="#2a1010" stroke-width="0.9"/><path d="M3.5 4.5 H8.5 M4.5 6.5 H9.5 M5.5 8.5 H9.5" stroke="#2a1010" stroke-width="0.9"/></svg>
<div class="lab" style="left:1457px;top:82px">KICK BASS</div>
<svg class="ic" style="left:1442px;top:122px" viewBox="0 0 13 13"><circle cx="6.5" cy="6.5" r="5.6" fill="none" stroke="#2a1010" stroke-width="0.9"/><path d="M5 3.8 L9.2 6.5 L5 9.2 Z" fill="#2a1010"/></svg>
<div class="lab" style="left:1462px;top:122px">KICK</div>
<svg class="ic" style="left:1442px;top:142px" viewBox="0 0 13 13"><circle cx="6.5" cy="6.5" r="5.6" fill="none" stroke="#2a1010" stroke-width="0.9"/><path d="M3.8 5.2 L9.2 5.2 L6.5 9 Z" fill="#2a1010"/></svg>
<div class="lab" style="left:1462px;top:143px">BASS</div>
<svg class="ic" style="left:1437px;top:221px" viewBox="0 0 13 13"><circle cx="6.5" cy="6.5" r="5.6" fill="none" stroke="#1a2a10" stroke-width="0.9"/><path d="M4 4.5 H9 M4 6.5 H9 M4 8.5 H9" stroke="#1a2a10" stroke-width="0.9"/></svg>
<div class="lab" style="left:1457px;top:221px">DRUMS</div>
<svg class="ic" style="left:1437px;top:261px" viewBox="0 0 13 13"><circle cx="6.5" cy="6.5" r="5.6" fill="none" stroke="#2a1020" stroke-width="0.9"/><path d="M3.5 4.5 H8.5 M4.5 6.5 H9.5 M5.5 8.5 H9.5" stroke="#2a1020" stroke-width="0.9"/></svg>
<div class="lab" style="left:1457px;top:261px;color:#2a1020">SYNTHS</div>

<svg class="ic" style="left:1442px;top:320px" viewBox="0 0 13 13"><circle cx="6.5" cy="6.5" r="5.6" fill="none" stroke="#2a1020" stroke-width="0.9"/><path d="M3.8 5.2 L9.2 5.2 L6.5 9 Z" fill="#2a1020"/></svg>
<div class="lab" style="left:1462px;top:320px;color:#2a1020">SYNTH 0</div>
<svg class="ic" style="left:1442px;top:361px" viewBox="0 0 13 13"><circle cx="6.5" cy="6.5" r="5.6" fill="none" stroke="#2a1020" stroke-width="0.9"/><path d="M3.8 5.2 L9.2 5.2 L6.5 9 Z" fill="#2a1020"/></svg>
<div class="lab" style="left:1462px;top:361px;color:#2a1020">SYNTH 2</div>
<svg class="ic" style="left:1442px;top:420px" viewBox="0 0 13 13"><circle cx="6.5" cy="6.5" r="5.6" fill="none" stroke="#2a1020" stroke-width="0.9"/><path d="M3.8 5.2 L9.2 5.2 L6.5 9 Z" fill="#2a1020"/></svg>
<div class="lab" style="left:1462px;top:420px;color:#2a1020">SYNTH RHYT</div>
<svg class="ic" style="left:1442px;top:498px" viewBox="0 0 13 13"><circle cx="6.5" cy="6.5" r="5.6" fill="none" stroke="#2a1020" stroke-width="0.9"/><path d="M3.8 5.2 L9.2 5.2 L6.5 9 Z" fill="#2a1020"/></svg>
<div class="lab" style="left:1462px;top:498px;color:#2a1020">SYNTH MAIN</div>
<svg class="ic" style="left:1442px;top:576px" viewBox="0 0 13 13"><circle cx="6.5" cy="6.5" r="5.6" fill="none" stroke="#2a1020" stroke-width="0.9"/><path d="M3.8 5.2 L9.2 5.2 L6.5 9 Z" fill="#2a1020"/></svg>
<div class="lab" style="left:1462px;top:576px;color:#2a1020">ARP PLUCK</div>
<svg class="ic" style="left:1442px;top:654px" viewBox="0 0 13 13"><circle cx="6.5" cy="6.5" r="5.6" fill="none" stroke="#2a1020" stroke-width="0.9"/><path d="M3.8 5.2 L9.2 5.2 L6.5 9 Z" fill="#2a1020"/></svg>
<div class="lab" style="left:1462px;top:654px;color:#2a1020">SYNTH 3</div>
<svg class="ic" style="left:1442px;top:732px" viewBox="0 0 13 13"><circle cx="6.5" cy="6.5" r="5.6" fill="none" stroke="#2a1020" stroke-width="0.9"/><path d="M3.8 5.2 L9.2 5.2 L6.5 9 Z" fill="#2a1020"/></svg>
<div class="lab" style="left:1462px;top:732px;color:#2a1020">ARP MAIN</div>

<svg class="ic" style="left:1436px;top:810px" viewBox="0 0 13 13"><circle cx="6.5" cy="6.5" r="5.6" fill="none" stroke="#163038" stroke-width="0.9"/><path d="M4 4.5 H9 M4 6.5 H9 M4 8.5 H9" stroke="#163038" stroke-width="0.9"/></svg>
<div class="lab" style="left:1457px;top:810px;color:#163038">ATMOS</div>
<svg class="ic" style="left:1436px;top:831px" viewBox="0 0 13 13"><circle cx="6.5" cy="6.5" r="5.6" fill="none" stroke="#2a3034" stroke-width="0.9"/><path d="M4 4.5 H9 M4 6.5 H9 M4 8.5 H9" stroke="#2a3034" stroke-width="0.9"/></svg>
<div class="lab" style="left:1457px;top:831px;color:#2a3034">VOCALS</div>
<svg class="ic" style="left:1436px;top:856px" viewBox="0 0 13 13"><circle cx="6.5" cy="6.5" r="5.6" fill="none" stroke="#2a3438" stroke-width="0.9"/><path d="M5 3.8 L9.2 6.5 L5 9.2 Z" fill="#2a3438"/></svg>
<div class="lab" style="left:1460px;top:856px;color:#2a3438;font-weight:bold">Main</div>

<!-- meters -->
<div class="m" style="top:81px;height:35px"></div><div class="m2" style="top:81px;height:35px"></div>
<div class="m" style="top:121px;height:16px"></div><div class="m2" style="top:121px;height:16px"></div>
<div class="m" style="top:142px;height:73px"></div><div class="m2" style="top:142px;height:73px"></div>
<div class="m" style="top:220px;height:35px"></div><div class="m2" style="top:220px;height:35px"></div>
<div class="m" style="top:260px;height:54px"></div><div class="m2" style="top:260px;height:54px"></div>
<div class="m" style="top:319px;height:36px"></div><div class="m2" style="top:319px;height:36px"></div>
<div class="m" style="top:360px;height:54px"></div><div class="m2" style="top:360px;height:54px"></div>
<div class="m" style="top:419px;height:73px"></div><div class="m2" style="top:419px;height:73px"></div>
<div class="m" style="top:497px;height:73px"></div><div class="m2" style="top:497px;height:73px"></div>
<div class="m" style="top:575px;height:73px"></div><div class="m2" style="top:575px;height:73px"></div>
<div class="m" style="top:653px;height:73px"></div><div class="m2" style="top:653px;height:73px"></div>
<div class="m" style="top:731px;height:73px"></div><div class="m2" style="top:731px;height:73px"></div>
<div class="m" style="top:809px;height:16px"></div><div class="m2" style="top:809px;height:16px"></div>
<div class="m" style="top:830px;height:16px"></div><div class="m2" style="top:830px;height:16px"></div>
<div class="m" style="top:855px;height:16px"></div><div class="m2" style="top:855px;height:16px"></div>

<!-- bottom right controls -->
<div class="a" style="left:1430px;top:872px;width:138px;height:21px;background:#333;"></div>
<div class="a" style="left:1434px;top:879px;width:15px;height:14px;background:#f5b35e;border:0.6px solid #111;"></div>
<svg class="a" style="left:1434px;top:879px" width="15" height="14"><path d="M3 6v3 M5 4v6 M7 2v10 M9 4v6 M11 5v4" stroke="#3a2a10" stroke-width="0.9"/></svg>
<div class="a" style="left:1453px;top:879px;width:36px;height:14px;background:#222;border:0.6px solid #111;"></div>
<div class="a" style="left:1453px;top:879px;width:10px;height:14px;background:#2b7a8c;"></div>
<div class="a" style="left:1455px;top:879px;font-size:11px;color:#ccc;line-height:14px;">1.00x</div>
<div class="a" style="left:1503px;top:879px;width:14px;height:14px;background:#1e1e1e;border:0.6px solid #111;color:#ccc;font-size:10px;text-align:center;line-height:14px;">H</div>
<div class="a" style="left:1521px;top:879px;width:15px;height:14px;background:#1e1e1e;border:0.6px solid #111;color:#ccc;font-size:10px;text-align:center;line-height:14px;">W</div>
</div>
</body></html>
